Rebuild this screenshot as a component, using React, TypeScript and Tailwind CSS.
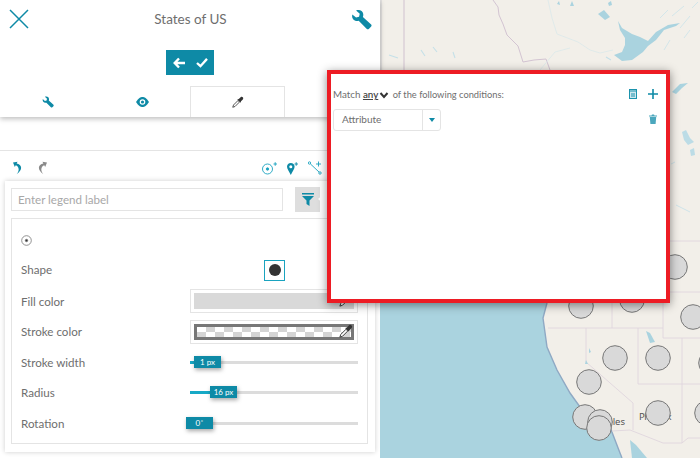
import React from "react";

const TEAL = "#0e8aa6";

function Wrench({ size, color = TEAL }: { size: number; color?: string }) {
  return (
    <svg width={size} height={size} viewBox="0 0 24 24" fill={color}>
      <path d="M1.5 6.2 L5.8 9.8 L9.2 8.8 L10 5.4 L5.8 1.6 C9.4 0.2 13.4 1.6 14 5.6 C14.2 7 14 8 13.6 9 L23 17.6 C23.8 18.4 23.6 19.4 22.8 20.4 L20.6 22.6 C19.6 23.4 18.6 23.4 17.8 22.6 L8.8 13.4 C4.6 14.6 0.2 11.4 1.5 6.2 Z" />
    </svg>
  );
}

function Dropper({ size }: { size: number }) {
  return (
    <svg width={size} height={size} viewBox="0 0 16 16">
      <path d="M1 15 L2 12 L8 6 L10 8 L4 14 Z" fill="#fff" stroke="#333" strokeWidth="1.1" />
      <path d="M7 4.5 L9 4 L11.5 1.5 C12.5 .7 13.6 .9 14.4 1.7 C15.2 2.5 15.2 3.6 14.4 4.5 L12 7 L11.5 9 Z" fill="#333" />
    </svg>
  );
}

function Eye() {
  return (
    <svg width="13" height="10" viewBox="0 0 13 10">
      <path d="M0 5 C2.5 1 4.5 0 6.5 0 C8.5 0 10.5 1 13 5 C10.5 9 8.5 10 6.5 10 C4.5 10 2.5 9 0 5 Z" fill={TEAL} />
      <circle cx="6.5" cy="5" r="2.8" fill="#fff" />
      <circle cx="6.5" cy="5" r="1.6" fill={TEAL} />
    </svg>
  );
}

function Row({ label, children }: { label: string; children: React.ReactNode }) {
  return (
    <div className="flex h-[30.5px] items-center">
      <span className="w-[169px] shrink-0 text-[11.6px] text-[#6e6e6e]">{label}</span>
      {children}
    </div>
  );
}

function Slider({ fill, left, label }: { fill: number; left: number; label: string }) {
  return (
    <div className="relative h-[3px] w-[168px] bg-[#dcdcdc]">
      <div className="h-full bg-[#17a9c6]" style={{ width: fill }} />
      <div
        className="absolute top-[-5px] flex h-[12px] w-[27px] items-center justify-center bg-[#0e8aa6] text-[8px] text-white shadow-[1px_2px_4px_rgba(0,0,0,0.35)]"
        style={{ left }}
      >
        {label}
      </div>
    </div>
  );
}

const Checker = () => (
  <div className="h-full w-full bg-white bg-[repeating-conic-gradient(#d4d4d4_0_25%,#ffffff_0_50%)] bg-[length:18px_10px]" />
);

function MapBackground() {
  const borders =
    "M548 328 H663 M612 303 V328 M586 328 V362 L633 403 V430 M612 431 L630 430 L663 443 H682 L688 438 H700 M638 328 V384 M638 384 H700 M682 338 V443 M663 303 V338 H700 M670 292 H700 M670 241 H700";
  return (
    <div className="absolute inset-y-0 left-[380px] right-0 overflow-hidden bg-[#f2efe9]">
      <svg width="320" height="458" viewBox="380 0 320 458" className="block">
        <rect x="380" y="0" width="320" height="458" fill="#f2efe9" />
        <path d="M381 0V458" stroke="#d2d2d6" strokeWidth="1" />
        <path d="M404 0V70" stroke="#d6c8d4" strokeWidth="1.2" />
        <path d="M493 0 L498 7 L499 15 L503 24 L507 35 L518 46 L523 62 L534 60 L546 59 L550 70" fill="none" stroke="#d3c4d2" strokeWidth="1" />
        <path d="M548 0 L552 18 L557 34 L578 42 L590 50 L600 53 L613 50" fill="none" stroke="#dbe9ea" strokeWidth="0.8" />
        <path d="M540 70 L555 52 L570 48" fill="none" stroke="#dbe9ea" strokeWidth="0.8" />
        <path d="M618 21 L622 28 L632 34 L640 37 L648 41 L656 32 L668 25 L680 23 L676 26 L664 30 L656 40 L648 46 L643 52 L632 60 L622 61 L614 55 L622 52 L625 45 L625 38 L620 30 Z" fill="#aad3df" />
        <path d="M598 14 L604 10 L610 17 L605 20 Z" fill="#aad3df" />
        <path d="M570 6 L572 1 L574 6 Z M557 4 L559 1 L560 5 Z M608 3 L611 1 L612 5 L609 6 Z" fill="#aad3df" />
        <path d="M389 55 L398 58 M421 50 L425 56 M433 47 L437 52 M453 52 L455 58 M611 60 L606 57" stroke="#c5e0e8" strokeWidth="1.1" />
        <path d="M660 18 L668 10 M672 16 L684 6 M690 16 L680 28 M664 50 L670 40 M684 38 L690 30 M692 8 L698 2" stroke="#cfe4ea" strokeWidth="0.9" />
        <path d="M672 92 L680 84 L688 83 L682 88 L676 94 Z" fill="#aad3df" />
        <path d="M682 132 L686 130 L690 138 L694 142 L688 145 L684 140 Z M690 150 L694 148 L695 155 L691 156 Z" fill="#bcdce6" />
        <path d="M671 164 L675 162 M676 205 L690 212" stroke="#cfe4ea" strokeWidth="1" />

        <path d="M380 303 H547 L543 318 L547 347 L557 370 L570 393 L580 407 L610 427 L620 453 L622 458 H380 Z" fill="#aad3df" />
        <path d="M547 303 L543 318 L547 347 L557 370 L570 393 L580 407 L610 427 L620 453 L622 458" fill="none" stroke="#8fa9c4" strokeWidth="1.4" />
        <path d="M630 440 L636 445 L647 458 H632 Z" fill="#aad3df" />
        <path d={borders} fill="none" stroke="#e0d6de" strokeWidth="0.9" />
        <path d="M646 331 L650 333 L655 342 L650 343 Z" fill="#aad3df" />
        <path d="M589 348 L591 352 L589 353 Z M586 360 L588 364 L585 364 Z" fill="#aad3df" />
        <text x="625" y="425" textAnchor="end" fontFamily="'Noto Sans', sans-serif" fontSize="9.5" fill="#555">Angeles</text>
        <text x="639" y="420" fontFamily="'Noto Sans', sans-serif" fontSize="9.5" letterSpacing="-0.6" fill="#555">Phoenix</text>
        {[
          [675, 267], [581, 306], [632, 300], [693, 317], [615, 358], [658, 358],
          [589, 382], [585, 417], [600, 422], [599, 428], [658, 413], [707, 413], [711, 363],
        ].map(([cx, cy], i) => (
          <circle key={i} cx={cx} cy={cy} r="12.3" fill="#d9d9d9" stroke="#777" strokeWidth="1" />
        ))}
      </svg>
    </div>
  );
}

export default function App() {
  return (
    <div
      className="relative h-[458px] w-[700px] overflow-hidden bg-white"
      style={{ fontFamily: "Lato, 'Noto Sans', sans-serif" }}
    >
      <MapBackground />

      <div className="relative flex h-[458px] w-[380px] flex-col bg-white">
        <div className="relative h-[117px] shadow-[0_2px_5px_rgba(0,0,0,0.25)]">
          <div className="flex h-[38px] items-center justify-between pl-[8px] pr-[8px]">
            <svg width="22" height="22" viewBox="0 0 22 22" fill="none" stroke={TEAL} strokeWidth="1.5">
              <path d="M2 2 L20 20 M20 2 L2 20" />
            </svg>
            <span className="text-[13.5px] text-[#6e6e6e]">States of US</span>
            <Wrench size={21} />
          </div>
          <div className="mt-[12px] flex justify-center">
            <div className="flex h-[25px] w-[48px] items-center justify-center gap-[11px] bg-[#0e8aa6]">
              <svg width="12" height="12" viewBox="0 0 12 12" fill="none" stroke="#fff" strokeWidth="2.4">
                <path d="M6 1.5 L1.7 6 L6 10.5 M2 6 H12" />
              </svg>
              <svg width="12" height="10" viewBox="0 0 13 11" fill="none" stroke="#fff" strokeWidth="2.6">
                <path d="M1 5.5 L4.8 9 L12 1" />
              </svg>
            </div>
          </div>
          <div className="mt-[11px] grid h-[31px] grid-cols-[190px_95px]">
            <div className="grid grid-cols-2">
              <div className="flex items-center justify-center"><Wrench size={12} /></div>
              <div className="flex items-center justify-center"><Eye /></div>
            </div>
            <div className="flex h-[31px] items-center justify-center border border-b-0 border-[#e4e4e4] bg-white">
              <Dropper size={12} />
            </div>
          </div>
        </div>

        <div className="mt-[33px] flex h-[31px] items-center justify-between border-t border-[#e4e4e4] pl-[13px] pr-[58px] pt-[4px]">
          <div className="flex items-center gap-[14px]">
            <svg width="10" height="14" viewBox="0 0 11 14" fill={TEAL}>
              <path d="M0 1 L5 0 L4 2 C9 3 12 8 4 14 C8 9 6 5 3 4 L2 6 Z" />
            </svg>
            <svg width="10" height="14" viewBox="0 0 11 14" fill="#8a8a8a">
              <path d="M11 1 L6 0 L7 2 C2 3 -1 8 7 14 C3 9 5 5 8 4 L9 6 Z" />
            </svg>
          </div>
          <div className="flex items-center gap-[10px]">
            <svg width="15" height="13" viewBox="0 0 15 13" fill="none" stroke="#1aa3bf" strokeWidth="0.9">
              <circle cx="5.5" cy="7" r="5" />
              <circle cx="5.5" cy="7" r="1.2" fill="#1aa3bf" />
              <path d="M11.5 2 H15 M13.2 .2 V3.8" />
            </svg>
            <svg width="11" height="13" viewBox="0 0 11 13">
              <path d="M3.8 1 C6 1 7.6 2.6 7.6 4.8 C7.6 7 5.2 10 3.8 13 C2.4 10 0 7 0 4.8 C0 2.6 1.6 1 3.8 1 Z" fill={TEAL} />
              <circle cx="3.8" cy="4.8" r="1.5" fill="#fff" />
              <path d="M7.5 2 H11 M9.2 .2 V3.8" stroke={TEAL} strokeWidth="0.9" />
            </svg>
            <svg width="14" height="14" viewBox="0 0 14 14" fill="none" stroke="#1aa3bf" strokeWidth="0.9">
              <circle cx="1.5" cy="2" r="1.2" />
              <circle cx="12" cy="12" r="1.2" />
              <path d="M2.5 3 L11 11 M8 3 H13 M10.5 .5 V5.5" />
            </svg>
          </div>
        </div>

        <div className="ml-[5px] h-[271px] w-[370px] bg-white px-[6px] pt-[6px] shadow-[0_0_5px_rgba(0,0,0,0.2)]">
          <div className="flex items-center">
            <div className="flex h-[23px] w-[272px] items-center border border-[#e4e4e4] px-[6px] text-[11.6px] text-[#a8a8a8]">
              Enter legend label
            </div>
            <div className="relative ml-[12px] flex h-[25px] w-[25px] items-center justify-center bg-[#dedede]">
              <svg width="12" height="13" viewBox="0 0 12 13" fill={TEAL}>
                <path d="M0 0 H12 V1.5 H0 Z M0 3 H12 L7.5 7.5 V13 L4.5 11 V7.5 Z" />
              </svg>
              <span className="absolute left-[23px] top-[6px] h-0 w-0 border-y-[6px] border-r-[7px] border-y-transparent border-r-white" />
            </div>
          </div>
          <div className="mt-[6px] h-[226px] w-[357px] border border-[#e4e4e4] px-[9px] pt-[8px]">
            <div className="flex h-[27px] items-center">
              <svg width="11" height="11" viewBox="0 0 11 11" fill="none" stroke="#777" strokeWidth="0.8">
                <circle cx="5.5" cy="5.5" r="4.8" />
                <circle cx="5.5" cy="5.5" r="1.2" fill="#333" />
              </svg>
            </div>
            <div className="flex h-[32px] items-center">
              <span className="w-[243px] text-[11.6px] text-[#6e6e6e]">Shape</span>
              <div className="flex h-[21px] w-[21px] items-center justify-center border border-[#1aa3bf]">
                <div className="h-[12px] w-[12px] rounded-full bg-[#333]" />
              </div>
            </div>
            <Row label="Fill color">
              <div className="relative h-[24px] w-[168px] border border-[#e4e4e4] p-[3px]">
                <div className="h-full w-full bg-[#d9d9d9]" />
                <span className="absolute right-[4px] top-[3px]"><Dropper size={14} /></span>
              </div>
            </Row>
            <Row label="Stroke color">
              <div className="relative h-[24px] w-[168px] border border-[#e4e4e4] p-[3px]">
                <div className="h-full w-full border-[3px] border-[#777]"><Checker /></div>
                <span className="absolute right-[4px] top-[3px]"><Dropper size={14} /></span>
              </div>
            </Row>
            <Row label="Stroke width"><Slider fill={4} left={4} label="1 px" /></Row>
            <Row label="Radius"><Slider fill={20} left={20} label="16 px" /></Row>
            <Row label="Rotation"><Slider fill={0} left={-4} label="0˚" /></Row>
          </div>
        </div>
      </div>

      <div className="absolute left-[327px] top-[70px] h-[233px] w-[343px] border-[4px] border-[#ed1c24] bg-white shadow-[0_2px_9px_rgba(0,0,0,0.45)]">
        <div className="flex items-center justify-between pl-[2px] pr-[8px] pt-[13px]">
          <div className="text-[9.8px] text-[#6e6e6e]">
            Match <span className="font-semibold text-[#444] underline">any</span>
            <svg className="mx-[1px] inline" width="10" height="7" viewBox="0 0 9 7" fill="none" stroke="#333" strokeWidth="2">
              <path d="M1 1 L4.5 5 L8 1" />
            </svg>
            <span className="text-[9.3px]"> of the following conditions:</span>
          </div>
          <div className="flex items-center gap-[11px]">
            <svg width="8" height="10" viewBox="0 0 8 10" fill="none" stroke="#1c93ad" strokeWidth="1">
              <rect x=".5" y=".5" width="7" height="9" fill="#cfe7ee" />
              <path d="M.5 2 H7.5 M2 5 H6 M2 7 H6" />
            </svg>
            <svg width="10" height="10" viewBox="0 0 10 10" fill="none" stroke={TEAL} strokeWidth="1.6">
              <path d="M5 0 V10 M0 5 H10" />
            </svg>
          </div>
        </div>
        <div className="mt-[7px] flex items-start justify-between pl-[2px] pr-[9px]">
          <div className="flex h-[22px] w-[108px] rounded-[3px] border border-[#e4e4e4]">
            <div className="flex flex-1 items-center border-r border-[#e4e4e4] pl-[8px] text-[10px] text-[#6e6e6e]">Attribute</div>
            <div className="flex w-[17px] items-center justify-center">
              <span className="h-0 w-0 border-x-[3.5px] border-t-[4px] border-x-transparent border-t-[#0e8aa6]" />
            </div>
          </div>
          <svg className="mt-[5px]" width="8" height="10" viewBox="0 0 8 10" fill="#4ba7bd">
            <path d="M0 1.5 H2.5 L3 .5 H5 L5.5 1.5 H8 V2.5 H0 Z M.8 3 H7.2 L6.6 10 H1.4 Z" />
          </svg>
        </div>
      </div>
    </div>
  );
}
